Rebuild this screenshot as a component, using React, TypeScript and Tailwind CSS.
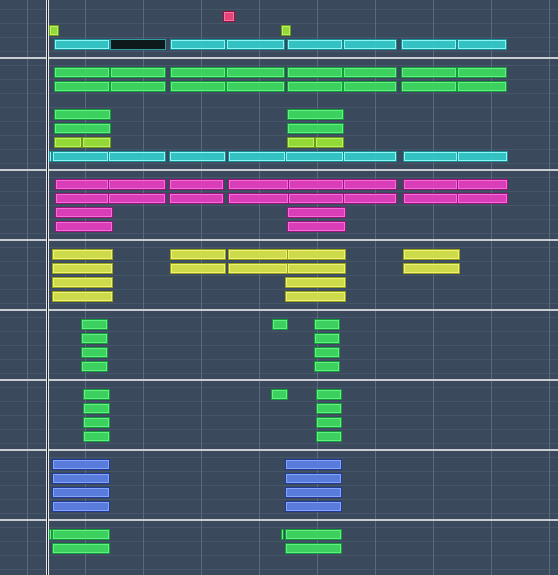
import React from "react";

type Tone = "cyan" | "sel" | "green" | "lime" | "pink" | "yellow" | "blue" | "rose";

// note colours: dark rim + light inner edge + translucent fill
const tones: Record<Tone, string> = {
  cyan: "border-[#1b8f95] bg-[#33ccccea] shadow-[inset_0_0_0_1px_#8ef5f5]",
  sel: "border-[#2f9ea2] bg-[#0e191c]",
  green: "border-[#179a3b] bg-[#3ddd5fea] shadow-[inset_0_0_0_1px_#62f083]",
  lime: "border-[#6f9a1c] bg-[#9be635ea] shadow-[inset_0_0_0_1px_#b9f462]",
  pink: "border-[#9c1480] bg-[#e83cc0ea] shadow-[inset_0_0_0_1px_#f36fd6]",
  yellow: "border-[#9aa317] bg-[#dbe84aea] shadow-[inset_0_0_0_1px_#eef27a]",
  blue: "border-[#1e3b9c] bg-[#5d80e8ea] shadow-[inset_0_0_0_1px_#87a5f4]",
  rose: "border-[#9a1040] bg-[#e8437b] shadow-[inset_0_0_0_1px_#f57aa0]",
};

type Note = [row: number, x1: number, x2: number, tone: Tone];

const span = (rows: number[], xs: [number, number][], tone: Tone): Note[] =>
  rows.flatMap((r) => xs.map(([a, b]) => [r, a, b, tone] as Note));

const fullBar: [number, number][] = [
  [54, 110], [110, 166], [170, 226], [226, 285], [287, 343], [343, 397], [401, 457], [457, 507],
];

const notes: Note[] = [
  [0, 223, 235, "rose"],
  [1, 49, 59, "lime"],
  [1, 281, 291, "lime"],
  [2, 54, 110, "cyan"],
  [2, 110, 166, "sel"],
  ...span([2], fullBar.slice(2), "cyan"),
  ...span([4, 5], fullBar, "green"),
  ...span([7, 8], [[54, 111], [287, 344]], "green"),
  ...span([9], [[54, 82], [82, 111], [287, 315], [315, 344]], "lime"),
  ...span(
    [10],
    [[49, 52], [52, 109], [108, 166], [169, 226], [228, 286], [285, 344], [343, 397], [403, 458], [457, 508]],
    "cyan"
  ),
  ...span(
    [12, 13],
    [[55, 109], [108, 166], [169, 224], [228, 289], [288, 344], [343, 397], [403, 458], [457, 508]],
    "pink"
  ),
  ...span([14, 15], [[55, 113], [287, 346]], "pink"),
  ...span([17, 18], [[52, 113], [170, 226], [228, 288], [287, 346], [403, 460]], "yellow"),
  ...span([19, 20], [[52, 113], [285, 346]], "yellow"),
  ...span([22], [[272, 288]], "green"),
  ...span([22, 23, 24, 25], [[81, 108], [314, 340]], "green"),
  ...span([27], [[271, 288]], "green"),
  ...span([27, 28, 29, 30], [[83, 110], [316, 342]], "green"),
  ...span([32, 33, 34, 35], [[52, 110], [285, 342]], "blue"),
  ...span([37], [[49, 52], [281, 284]], "green"),
  ...span([37, 38], [[52, 110], [285, 342]], "green"),
];

const ROW = 14;
const TOP = 11;

// section heights between the octave separators
const sections = [57, 110, 68, 68, 68, 68, 68, 54];

export default function App() {
  return (
    <div className="relative h-[575px] w-[558px] overflow-hidden bg-[#3a4a5c] bg-[repeating-linear-gradient(to_bottom,transparent_0,transparent_9px,#45566a_9px,#45566a_10px,transparent_10px,transparent_14px)] font-['Liberation_Sans',sans-serif]">
      {/* beat columns */}
      <div className="absolute inset-0 flex">
        <div className="w-[27px] shrink-0" />
        {Array.from({ length: 9 }).map((_, i) => (
          <div key={i} className="w-[58px] shrink-0 border-l border-[#5b6a7b]" />
        ))}
        <div className="flex-1 border-l border-[#5b6a7b]" />
      </div>

      {/* octave separators */}
      <div className="absolute inset-0 flex flex-col">
        {sections.map((h, i) => (
          <React.Fragment key={i}>
            {i > 0 && <div className="h-[2px] shrink-0 bg-[#c9cdd2]" />}
            <div className="shrink-0" style={{ height: h }} />
          </React.Fragment>
        ))}
      </div>

      {/* notes */}
      {notes.map(([row, a, b, tone], i) => (
        <div
          key={i}
          className={`absolute h-[11px] border ${tones[tone]}`}
          style={{ top: TOP + row * ROW, left: a, width: b - a }}
        />
      ))}

      {/* playhead */}
      <div className="absolute top-0 bottom-0 left-[46px] w-[3px] border-x border-[#e4e6e8] bg-[#1d2833]" />
    </div>
  );
}
